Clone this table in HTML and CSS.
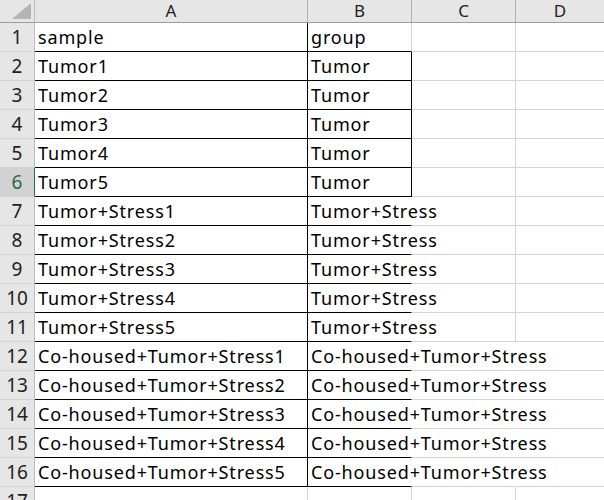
FILE: index.html
```html
<!DOCTYPE html>
<html>
<head>
<meta charset="utf-8">
<link rel="stylesheet" href="styles.css">
</head>
<body>
<div class="sheet">
  <div class="corner"><span class="tri"></span></div>
  <div class="colh">A</div>
  <div class="colh">B</div>
  <div class="colh">C</div>
  <div class="colh">D</div>

  <div class="rowh">1</div>
  <div class="c a">sample</div>
  <div class="c b1">group</div>
  <div class="c"></div><div class="c"></div>

  <div class="rowh">2</div>
  <div class="c a">Tumor1</div>
  <div class="c bx">Tumor</div>
  <div class="c"></div><div class="c"></div>

  <div class="rowh">3</div>
  <div class="c a">Tumor2</div>
  <div class="c bx">Tumor</div>
  <div class="c"></div><div class="c"></div>

  <div class="rowh">4</div>
  <div class="c a">Tumor3</div>
  <div class="c bx">Tumor</div>
  <div class="c"></div><div class="c"></div>

  <div class="rowh">5</div>
  <div class="c a">Tumor4</div>
  <div class="c bx">Tumor</div>
  <div class="c"></div><div class="c"></div>

  <div class="rowh active">6</div>
  <div class="c a">Tumor5</div>
  <div class="c bx">Tumor</div>
  <div class="c"></div><div class="c"></div>

  <div class="rowh">7</div>
  <div class="c a">Tumor+Stress1</div>
  <div class="c bo">Tumor+Stress</div>
  <div class="c"></div><div class="c"></div>

  <div class="rowh">8</div>
  <div class="c a">Tumor+Stress2</div>
  <div class="c bo">Tumor+Stress</div>
  <div class="c"></div><div class="c"></div>

  <div class="rowh">9</div>
  <div class="c a">Tumor+Stress3</div>
  <div class="c bo">Tumor+Stress</div>
  <div class="c"></div><div class="c"></div>

  <div class="rowh">10</div>
  <div class="c a">Tumor+Stress4</div>
  <div class="c bo">Tumor+Stress</div>
  <div class="c"></div><div class="c"></div>

  <div class="rowh">11</div>
  <div class="c a">Tumor+Stress5</div>
  <div class="c bo">Tumor+Stress</div>
  <div class="c"></div><div class="c"></div>

  <div class="rowh">12</div>
  <div class="c a">Co-housed+Tumor+Stress1</div>
  <div class="c bo">Co-housed+Tumor+Stress</div>
  <div class="c no"></div><div class="c"></div>

  <div class="rowh">13</div>
  <div class="c a">Co-housed+Tumor+Stress2</div>
  <div class="c bo">Co-housed+Tumor+Stress</div>
  <div class="c no"></div><div class="c"></div>

  <div class="rowh">14</div>
  <div class="c a">Co-housed+Tumor+Stress3</div>
  <div class="c bo">Co-housed+Tumor+Stress</div>
  <div class="c no"></div><div class="c"></div>

  <div class="rowh">15</div>
  <div class="c a">Co-housed+Tumor+Stress4</div>
  <div class="c bo">Co-housed+Tumor+Stress</div>
  <div class="c no"></div><div class="c"></div>

  <div class="rowh">16</div>
  <div class="c a">Co-housed+Tumor+Stress5</div>
  <div class="c bo">Co-housed+Tumor+Stress</div>
  <div class="c no"></div><div class="c"></div>

  <div class="rowh">17</div>
  <div class="c"></div>
  <div class="c"></div>
  <div class="c"></div><div class="c"></div>
</div>
</body>
</html>
```

FILE: styles.css
```css
html, body {
  margin: 0;
  padding: 0;
  background: #ffffff;
  overflow: hidden;
}

.sheet {
  display: grid;
  width: 604px;
  grid-template-columns: 35px 273px 104px 104px 88px;
  grid-template-rows: 23px repeat(16, 29px) 14px;
  overflow: hidden;
  font-family: "Noto Sans", "DejaVu Sans", sans-serif;
  color: #000000;
}

.sheet > :nth-child(5n) {
  border-right: none;
}

.corner {
  background: #e6e6e6;
  border-right: 1px solid #bcbcbc;
  border-bottom: 1px solid #9e9e9e;
  display: flex;
  justify-content: flex-end;
  align-items: flex-end;
  padding: 0 3px 3px 0;
}

.tri {
  width: 0;
  height: 0;
  border-left: 19px solid transparent;
  border-bottom: 16px solid #b4b4b4;
}

.colh {
  background: #e6e6e6;
  border-right: 1px solid #b0b0b0;
  border-bottom: 1px solid #9e9e9e;
  font-size: 17px;
  line-height: 22px;
  text-align: center;
  color: #222222;
}

.rowh {
  background: #e6e6e6;
  border-right: 1px solid #bcbcbc;
  border-bottom: 1px solid #d2d2d2;
  font-size: 19px;
  line-height: 28px;
  text-align: center;
  color: #222222;
  overflow: hidden;
}

.rowh.active {
  background: #d2d2d2;
  color: #1e6b47;
  border-right: 1px solid #217346;
}

.c {
  border-right: 1px solid #d4d4d4;
  border-bottom: 1px solid #d4d4d4;
  font-size: 18px;
  letter-spacing: 0.85px;
  line-height: 26px;
  padding: 1px 0 0 3px;
  white-space: nowrap;
  overflow: visible;
}

.c.a {
  border-right-color: #000000;
  border-bottom-color: #000000;
}

.c.b1 {
  border-bottom-color: #000000;
}

.c.bx {
  border-right-color: #000000;
  border-bottom-color: #000000;
}

.c.bo {
  border-right-color: transparent;
  border-bottom-color: #000000;
}

.c.no {
  border-right-color: transparent;
}
```
